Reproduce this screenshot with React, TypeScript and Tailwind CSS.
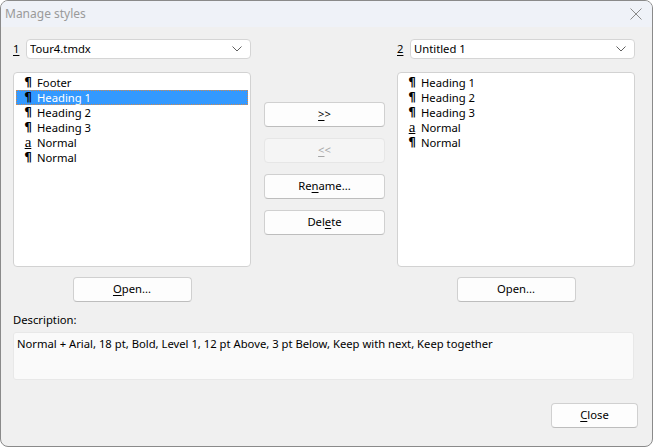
import React from "react";

type Item = { kind: "para" | "char"; name: string };

const leftItems: Item[] = [
  { kind: "para", name: "Footer" },
  { kind: "para", name: "Heading 1" },
  { kind: "para", name: "Heading 2" },
  { kind: "para", name: "Heading 3" },
  { kind: "char", name: "Normal" },
  { kind: "para", name: "Normal" },
];

const rightItems: Item[] = [
  { kind: "para", name: "Heading 1" },
  { kind: "para", name: "Heading 2" },
  { kind: "para", name: "Heading 3" },
  { kind: "char", name: "Normal" },
  { kind: "para", name: "Normal" },
];

const Chevron = () => (
  <svg width="10" height="6" viewBox="0 0 10 6" className="shrink-0">
    <path d="M0.5 0.5 L5 5 L9.5 0.5" fill="none" stroke="#606060" strokeWidth="1" />
  </svg>
);

const Combo = ({ label, value }: { label: string; value: string }) => (
  <div className="flex items-center h-[20px]">
    <span className="w-[13px] underline underline-offset-2">{label}</span>
    <div className="flex-1 h-[20px] bg-white border border-[#d5d5d5] rounded-[4px] flex items-center pl-[3px] pr-[8px]">
      <span className="flex-1 truncate">{value}</span>
      <Chevron />
    </div>
  </div>
);

const StyleIcon = ({ kind }: { kind: Item["kind"] }) =>
  kind === "para" ? (
    <span className="w-[10px] shrink-0 text-center font-bold text-[12px] leading-[13px] text-black font-['DejaVu_Sans',sans-serif]">
      ¶
    </span>
  ) : (
    <span className="w-[10px] shrink-0 text-center underline underline-offset-1 text-[15px] leading-[13px] text-black font-['Liberation_Serif',serif]">
      a
    </span>
  );

const StyleList = ({ items, selected }: { items: Item[]; selected?: number }) => (
  <div className="h-[195px] bg-white border border-[#d2d2d2] rounded-[4px] pt-[2px] px-[2px]">
    {items.map((it, i) => {
      const sel = i === selected;
      return (
        <div
          key={i}
          className={
            "h-[15px] flex items-center pl-[6px] gap-[4px] border border-dotted " +
            (sel ? "bg-[#3399ff] text-white border-[#d08a50]" : "border-transparent")
          }
        >
          <StyleIcon kind={it.kind} />
          <span className="leading-[15px] whitespace-nowrap">{it.name}</span>
        </div>
      );
    })}
  </div>
);

const Btn = ({
  children,
  w,
  disabled,
}: {
  children: React.ReactNode;
  w: string;
  disabled?: boolean;
}) => (
  <div
    className={
      "h-[25px] rounded-[4px] border flex items-center justify-center " +
      w +
      " " +
      (disabled
        ? "bg-[#f5f5f5] border-[#e6e6e6] text-[#a6a6a6]"
        : "bg-[#fdfdfd] border-[#d0d0d0] border-b-[#bdbdbd] text-black")
    }
  >
    {children}
  </div>
);

const U = ({ c }: { c: string }) => <span className="underline underline-offset-2">{c}</span>;

export default function App() {
  return (
    <div className="w-[653px] h-[447px] overflow-hidden bg-white">
      <div className="w-[653px] h-[447px] flex flex-col bg-[#f0f0f0] border border-[#8a8a8a] rounded-[8px] overflow-hidden text-[11.25px] text-black font-['Noto_Sans','Liberation_Sans',sans-serif]">
        <div className="h-[26px] shrink-0 bg-[#eff2f8] flex items-center justify-between pl-[4px] pr-[10px]">
          <span className="text-[#9a9a9a] text-[12px]">Manage styles</span>
          <svg width="12" height="12" viewBox="0 0 12 12">
            <path d="M0.5 0.5 L11.5 11.5 M11.5 0.5 L0.5 11.5" stroke="#8a8a8a" strokeWidth="1" />
          </svg>
        </div>

        <div className="flex-1 flex flex-col pt-[12px] pl-[12px] pr-[17px]">
          <div className="flex">
            <div className="w-[238px] flex flex-col">
              <Combo label="1" value="Tour4.tmdx" />
              <div className="mt-[13px]">
                <StyleList items={leftItems} selected={1} />
              </div>
              <div className="flex justify-center mt-[10px]">
                <Btn w="w-[119px]">
                  <U c="O" />
                  pen...
                </Btn>
              </div>
            </div>

            <div className="w-[121px] ml-[13px] flex flex-col gap-[11px] pt-[63px]">
              <Btn w="w-[121px]">
                <U c=">" />
                {">"}
              </Btn>
              <Btn w="w-[121px]" disabled>
                <U c="<" />
                {"<"}
              </Btn>
              <Btn w="w-[121px]">
                Re<U c="n" />
                ame...
              </Btn>
              <Btn w="w-[121px]">
                Del<U c="e" />
                te
              </Btn>
            </div>

            <div className="w-[238px] ml-[12px] flex flex-col">
              <Combo label="2" value="Untitled 1" />
              <div className="mt-[13px]">
                <StyleList items={rightItems} />
              </div>
              <div className="flex justify-center mt-[10px]">
                <Btn w="w-[119px]">Open...</Btn>
              </div>
            </div>
          </div>

          <div className="mt-[10px] leading-[16px]">Description:</div>
          <div className="mt-[4px] h-[48px] w-[621px] bg-[#fafafa] border border-[#e8e8e8] rounded-[3px] px-[3px] pt-[2px] leading-[17px]">
            Normal + Arial, 18 pt, Bold, Level 1, 12 pt Above, 3 pt Below, Keep with next, Keep together
          </div>

          <div className="flex justify-end mt-[23px] -mr-[3px]">
            <Btn w="w-[87px]">
              <U c="C" />
              lose
            </Btn>
          </div>
        </div>
      </div>
    </div>
  );
}
